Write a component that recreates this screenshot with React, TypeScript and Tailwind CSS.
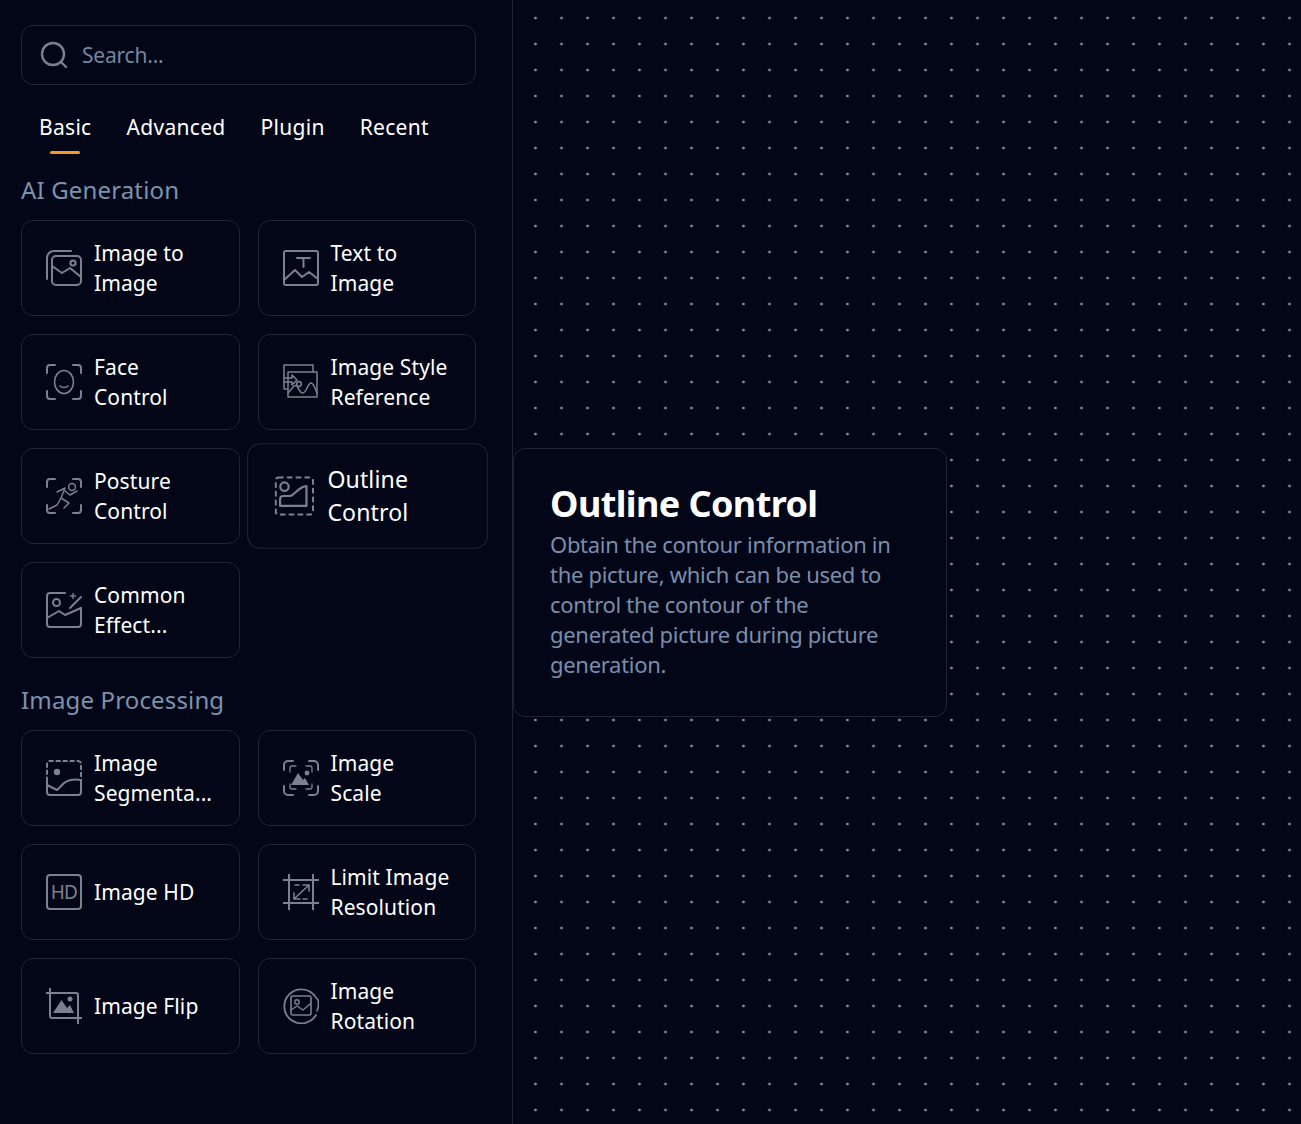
import type { ReactNode } from "react";

const stroke = "#7a828f";

function Icon({ children, className = "" }: { children: ReactNode; className?: string }) {
  return (
    <svg
      viewBox="0 0 36 36"
      fill="none"
      stroke={stroke}
      strokeWidth="2"
      strokeLinecap="round"
      strokeLinejoin="round"
      className={`w-9 h-9 shrink-0 ${className}`}
    >
      {children}
    </svg>
  );
}

const corners = "M1 9V4a3 3 0 0 1 3-3h5M27 1h5a3 3 0 0 1 3 3v5M35 27v5a3 3 0 0 1-3 3h-5M9 35H4a3 3 0 0 1-3-3v-5";

const icons: Record<string, ReactNode> = {
  imageToImage: (
    <>
      <path d="M1 29V8a7 7 0 0 1 7-7h17" />
      <rect x="6" y="6" width="29" height="29" rx="4" />
      <path d="M6 16l10 7 8-5 11 9" />
      <circle cx="27" cy="13" r="2.600" />
    </>
  ),
  textToImage: (
    <>
      <rect x="1" y="1" width="34" height="34" rx="2" />
      <path d="M14 8h13M20.500 8v9" />
      <path d="M1 30l11-10 7 7 7-5 9 7" />
    </>
  ),
  face: (
    <>
      <path d={corners} />
      <ellipse cx="18" cy="18" rx="9.500" ry="11.500" strokeWidth="1.600" />
      <path d="M14 22c2 2 6 2 8 0" strokeWidth="1.600" />
    </>
  ),
  style: (
    <g strokeWidth="1.500">
      <path d="M4 25H1V1h29v7" />
      <rect x="5" y="8" width="29" height="25" />
      <path d="M1 14h8V11l5 5-5 5v-3H1" />
      <circle cx="16" cy="20" r="2.400" />
      <path d="M5 29l6-7c4-3 5 8 9 7 4-1 4-9 8-10 3 0 4 6 6 10" />
    </g>
  ),
  posture: (
    <>
      <path d={corners} />
      <g strokeWidth="1.500">
        <circle cx="26" cy="9" r="3.400" />
        <path d="M11 14l8-4-4 10 8 5-5 5" />
        <path d="M15 20l-4 7-8 4" />
        <path d="M19 13l5 4 7-4" />
      </g>
    </>
  ),
  outline: (
    <>
      <rect x="1" y="1" width="34" height="34" rx="3" strokeDasharray="3.500 4.500" />
      <circle cx="9" cy="9.500" r="3.800" />
      <path d="M5 27v-6c0-2 1-3 3-3h6c4 0 8-9 15-9v18z" />
    </>
  ),
  effect: (
    <>
      <path d="M19 1H4a3 3 0 0 0-3 3v28a3 3 0 0 0 3 3h28a3 3 0 0 0 3-3V16" />
      <circle cx="10.500" cy="10.500" r="3.500" />
      <path d="M1 26l12-7 6 4 16-7" />
      <path d="M24 16L35 5" />
      <path d="M27 1.500v5M24.500 4h5" strokeWidth="1.400" />
    </>
  ),
  segment: (
    <>
      <path d="M1 21V4a3 3 0 0 1 3-3h28a3 3 0 0 1 3 3v17" strokeDasharray="3.500 3.500" />
      <path d="M1 22v10a3 3 0 0 0 3 3h28a3 3 0 0 0 3-3V20" />
      <circle cx="11" cy="12" r="3.200" fill={stroke} stroke="none" />
      <path d="M1 25l10 5c4-2 6-13 24-10" />
    </>
  ),
  hd: (
    <>
      <rect x="1" y="1" width="34" height="34" rx="3" />
      <text
        x="18"
        y="25"
        textAnchor="middle"
        fontSize="19"
        stroke="none"
        fill={stroke}
        fontFamily="Noto Sans, sans-serif"
        letterSpacing="-0.8"
      >
        HD
      </text>
    </>
  ),
  flip: (
    <>
      <path d="M0.500 5H30a2 2 0 0 1 2 2V35.500M4 0.500V28a2 2 0 0 0 2 2H35.500" />
      <path d="M7 25l8.500-13 5.500 8 3-3 4 8z" fill={stroke} stroke="none" />
      <circle cx="24" cy="11" r="2.500" fill={stroke} stroke="none" />
    </>
  ),
  scale: (
    <>
      <path d="M1 10V5a4 4 0 0 1 4-4h5M26 1h5a4 4 0 0 1 4 4v5M35 26v5a4 4 0 0 1-4 4h-5M10 35H5a4 4 0 0 1-4-4v-5" />
      <path d="M7 12V8a2 2 0 0 1 2-2h4M23 6h4a2 2 0 0 1 2 2v4M29 24v3a2 2 0 0 1-2 2h-4M13 29H9a2 2 0 0 1-2-2v-3" strokeWidth="1.300" />
      <path d="M8 25l7-12 5 7 2-2 4 7z" fill={stroke} stroke="none" />
      <circle cx="24" cy="13" r="2.400" fill={stroke} stroke="none" />
    </>
  ),
  limit: (
    <>
      <path d="M0.500 6h35M0.500 29h35M6 0.500v35M30 0.500v35" />
      <path d="M11 25l15-14M20 11h6v6M11 19v6h6" strokeWidth="1.600" />
      <path d="M12 11h4M24 25h-4" strokeWidth="1.600" />
    </>
  ),
  rotation: (
    <>
      <path d="M31 7A17 17 0 1 0 33 27" strokeWidth="1.800" />
      <path d="M35 12a17 17 0 0 1-1 11M35 12l-4-5" strokeWidth="1.600" />
      <rect x="8" y="8" width="20" height="19" rx="2" strokeWidth="1.600" />
      <circle cx="14" cy="14" r="2.200" strokeWidth="1.400" />
      <path d="M8 22l6-4 6 4 7-6" strokeWidth="1.400" />
    </>
  ),
};

function ToolCard({ icon, label, active }: { icon: string; label: ReactNode; active?: boolean }) {
  return (
    <div
      className={`h-24 flex items-center gap-3 px-6 rounded-xl border border-[#1e2533] bg-[#020617] ${
        active ? "scale-110 relative z-10" : ""
      }`}
    >
      <Icon>{icons[icon]}</Icon>
      <span className="text-white text-[21px] leading-[30px] tracking-[0.1px]">{label}</span>
    </div>
  );
}

function SectionTitle({ children, className = "" }: { children: ReactNode; className?: string }) {
  return <h2 className={`text-[#7d92ad] text-[24px] leading-[34px] tracking-[0.15px] mb-[13px] ${className}`}>{children}</h2>;
}

const tabs = ["Basic", "Advanced", "Plugin", "Recent"];

export default function App() {
  return (
    <div className="flex h-screen overflow-hidden bg-[#020617] font-['Noto_Sans',sans-serif]">
      {/* Node list */}
      <aside className="w-[513px] shrink-0 border-r border-[#1e2533] pl-[21px] pr-9 pt-[25px]">
        <div className="h-[60px] flex items-center gap-[14px] px-[18px] rounded-xl border border-[#1e2533]">
          <svg viewBox="0 0 28 28" fill="none" stroke={stroke} strokeWidth="2.400" strokeLinecap="round" className="w-7 h-7 shrink-0">
            <circle cx="13" cy="13" r="11" />
            <path d="M21 21l5 5" />
          </svg>
          <span className="text-[#74879f] text-[21px] tracking-[-0.2px] pt-[2px]">Search...</span>
        </div>

        <div className="flex gap-[35px] pl-[18px] mt-[27px] mb-[19px]">
          {tabs.map((tab, i) => (
            <div key={tab} className="flex flex-col items-center">
              <span className="text-white text-[21px] leading-[30px] tracking-[0.3px]">{tab}</span>
              <div className={`w-[30px] h-[3px] mt-[9px] rounded-full ${i === 0 ? "bg-[#f59a23]" : "bg-transparent"}`} />
            </div>
          ))}
        </div>

        <SectionTitle>AI Generation</SectionTitle>
        <div className="grid grid-cols-2 gap-[18px]">
          <ToolCard icon="imageToImage" label={<>Image to<br />Image</>} />
          <ToolCard icon="textToImage" label={<>Text to<br />Image</>} />
          <ToolCard icon="face" label={<>Face<br />Control</>} />
          <ToolCard icon="style" label={<>Image Style<br />Reference</>} />
          <ToolCard icon="posture" label={<>Posture<br />Control</>} />
          <ToolCard icon="outline" label={<>Outline<br />Control</>} active />
          <ToolCard icon="effect" label={<>Common<br />Effect...</>} />
        </div>

        <SectionTitle className="mt-[25px]">Image Processing</SectionTitle>
        <div className="grid grid-cols-2 gap-[18px]">
          <ToolCard icon="segment" label={<>Image<br />Segmenta...</>} />
          <ToolCard icon="scale" label={<>Image<br />Scale</>} />
          <ToolCard icon="hd" label="Image HD" />
          <ToolCard icon="limit" label={<>Limit Image<br />Resolution</>} />
          <ToolCard icon="flip" label="Image Flip" />
          <ToolCard icon="rotation" label={<>Image<br />Rotation</>} />
        </div>
      </aside>

      {/* Dot canvas with the hover tooltip */}
      <main className="relative flex-1 bg-[radial-gradient(circle,#8f95a0_1.100px,transparent_1.700px)] bg-[size:26px_26px] bg-[position:9.500px_5px]">
        <div className="absolute left-0 top-[448px] w-[434px] h-[269px] rounded-xl border border-[#1e2533] bg-[#020617] px-9 pt-[30px]">
          <h3 className="text-white font-bold text-[36px] leading-[50px] tracking-[-0.6px]">Outline Control</h3>
          <p className="text-[#7a8eab] text-[22px] leading-[30px] tracking-[-0.3px]">
            Obtain the contour information in the picture, which can be used to control the contour of the generated picture during picture generation.
          </p>
        </div>
      </main>
    </div>
  );
}
